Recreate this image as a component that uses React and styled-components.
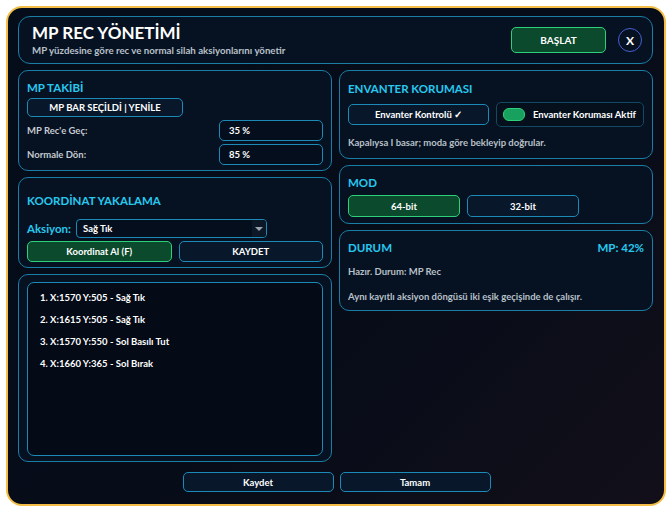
import styled, { createGlobalStyle, css } from 'styled-components';

const GlobalStyle = createGlobalStyle`
	html, body {
		margin: 0;
		padding: 0;
		background: #ffffff;
	}
	body {
		font-family: Lato, "Noto Sans", sans-serif;
		color: #ffffff;
	}
	* { box-sizing: border-box; }
`;

const coords = [
	'1. X:1570 Y:505 - Sağ Tık',
	'2. X:1615 Y:505 - Sağ Tık',
	'3. X:1570 Y:550 - Sol Basılı Tut',
	'4. X:1660 Y:365 - Sol Bırak',
];

export default function App() {
	return (
		<>
			<GlobalStyle />
			<Page>
				<Frame>
					<Header>
						<div>
							<Title>MP REC YÖNETİMİ</Title>
							<Subtitle>MP yüzdesine göre rec ve normal silah aksiyonlarını yönetir</Subtitle>
						</div>
						<HeaderActions>
							<Button green width="95px" height="26px" size="10px">BAŞLAT</Button>
							<CloseButton>X</CloseButton>
						</HeaderActions>
					</Header>

					<Columns>
						<Column>
							<Panel bottom="5px">
								<PanelTitle mb="3px">MP TAKİBİ</PanelTitle>
								<Button width="156px" height="19px">MP BAR SEÇİLDİ | YENİLE</Button>
								<Fields>
									<FieldRow>
										<FieldLabel>MP Rec'e Geç:</FieldLabel>
										<Input>35 %</Input>
									</FieldRow>
									<FieldRow>
										<FieldLabel>Normale Dön:</FieldLabel>
										<Input>85 %</Input>
									</FieldRow>
								</Fields>
							</Panel>

							<Panel bottom="5px">
								<PanelTitle mt="6px" mb="11px">KOORDİNAT YAKALAMA</PanelTitle>
								<ActionRow>
									<ActionLabel>Aksiyon:</ActionLabel>
									<Select>
										<span>Sağ Tık</span>
										<Arrow />
									</Select>
								</ActionRow>
								<ButtonPair cols="1fr 1fr">
									<Button green height="21px">Koordinat Al (F)</Button>
									<Button height="21px">KAYDET</Button>
								</ButtonPair>
							</Panel>

							<Panel grow>
								<ListBox>
									{coords.map((c) => (
										<ListItem key={c}>{c}</ListItem>
									))}
								</ListBox>
							</Panel>
						</Column>

						<Column>
							<Panel bottom="9px">
								<PanelTitle mt="1px" mb="6px">ENVANTER KORUMASI</PanelTitle>
								<ButtonPair cols="141px 148px">
									<Button height="21px">Envanter Kontrolü ✓</Button>
									<ToggleBox>
										<Pill />
										<span>Envanter Koruması Aktif</span>
									</ToggleBox>
								</ButtonPair>
								<Hint top="9px">Kapalıysa I basar; moda göre bekleyip doğrular.</Hint>
							</Panel>

							<Panel bottom="6px">
								<PanelTitle mb="5px">MOD</PanelTitle>
								<ModRow>
									<Button green height="22px">64-bit</Button>
									<Button height="22px">32-bit</Button>
								</ModRow>
							</Panel>

							<Panel bottom="7px">
								<StatusHead>
									<PanelTitle as="span">DURUM</PanelTitle>
									<PanelTitle as="span">MP: 42%</PanelTitle>
								</StatusHead>
								<Hint top="10px">Hazır. Durum: MP Rec</Hint>
								<Hint top="12px">Aynı kayıtlı aksiyon döngüsü iki eşik geçişinde de çalışır.</Hint>
							</Panel>
						</Column>
					</Columns>

					<Footer>
						<Button width="151px" height="20px">Kaydet</Button>
						<Button width="151px" height="20px">Tamam</Button>
					</Footer>
				</Frame>
			</Page>
		</>
	);
}

// STYLES

const Page = styled.div`
	width: 672px;
	height: 512px;
	padding: 6px;
	background: #ffffff;
`;

const Frame = styled.div`
	width: 660px;
	height: 500px;
	border: 2px solid #f4bd45;
	border-radius: 16px;
	background: linear-gradient(135deg, #050d1a 0%, #060c18 55%, #120f19 100%);
	padding: 8px 11px 12px 10px;
	display: flex;
	flex-direction: column;
	overflow: hidden;
`;

const Header = styled.div`
	height: 48px;
	flex-shrink: 0;
	border: 1px solid #1b7ea6;
	border-radius: 12px;
	background: #061222;
	display: flex;
	align-items: center;
	justify-content: space-between;
	padding: 0 10px 0 13px;
`;

const Title = styled.div`
	font-size: 17px;
	font-weight: 700;
	line-height: 20px;
	color: #ffffff;
`;

const Subtitle = styled.div`
	font-size: 9.7px;
	font-weight: 700;
	color: #b8c0c8;
	line-height: 13px;
	margin-top: 1px;
`;

const HeaderActions = styled.div`
	display: flex;
	align-items: center;
	gap: 12px;
`;

const CloseButton = styled.div`
	width: 24px;
	height: 24px;
	border-radius: 50%;
	border: 1px solid #4a5ed0;
	display: flex;
	align-items: center;
	justify-content: center;
	font-size: 12px;
	font-weight: 700;
`;

const Columns = styled.div`
	flex: 1;
	display: grid;
	grid-template-columns: 314px 314px;
	gap: 7px;
	margin-top: 6px;
	min-height: 0;
`;

const Column = styled.div`
	display: flex;
	flex-direction: column;
	gap: 6px;
	min-height: 0;
`;

const Panel = styled.div`
	border: 1px solid #1b7ea6;
	border-radius: 10px;
	background: #061222;
	padding: 9px 8px ${({ bottom }) => bottom || '4px'} 8px;
	${({ grow }) => grow && css`
		flex: 1;
		display: flex;
		padding: 7px 8px 5px 8px;
	`}
`;

const PanelTitle = styled.div`
	font-size: 11.5px;
	font-weight: 700;
	color: #27c9ef;
	line-height: 15px;
	margin-top: ${({ mt }) => mt || '0'};
	margin-bottom: ${({ mb }) => mb || '0'};
`;

const Button = styled.div`
	width: ${({ width }) => width || 'auto'};
	height: ${({ height }) => height || '20px'};
	border: 1px solid ${({ green }) => (green ? '#2fd07a' : '#1b8ab8')};
	background: ${({ green }) => (green ? '#0b4a2c' : '#081729')};
	border-radius: 5px;
	display: flex;
	align-items: center;
	justify-content: center;
	font-size: ${({ size }) => size || '9.5px'};
	font-weight: 700;
	color: #ffffff;
	white-space: nowrap;
`;

const Fields = styled.div`
	display: flex;
	flex-direction: column;
	gap: 3px;
	margin-top: 3px;
`;

const FieldRow = styled.div`
	display: flex;
	align-items: center;
	justify-content: space-between;
`;

const FieldLabel = styled.span`
	font-size: 9.5px;
	font-weight: 700;
	color: #c4cad0;
`;

const Input = styled.div`
	width: 104px;
	height: 21px;
	border: 1px solid #1b8ab8;
	border-radius: 5px;
	background: #050e1c;
	padding-left: 9px;
	display: flex;
	align-items: center;
	font-size: 9.5px;
	font-weight: 700;
	color: #ffffff;
`;

const ActionRow = styled.div`
	display: flex;
	align-items: center;
	gap: 5px;
	margin-bottom: 3px;
`;

const ActionLabel = styled.span`
	font-size: 11.5px;
	font-weight: 700;
	color: #27c9ef;
`;

const Select = styled.div`
	width: 191px;
	height: 19px;
	border: 1px solid #1b8ab8;
	border-radius: 4px;
	background: #050e1c;
	display: flex;
	align-items: center;
	justify-content: space-between;
	padding: 0 0 0 6px;
	font-size: 9.5px;
	font-weight: 700;
	overflow: hidden;
`;

const Arrow = styled.span`
	width: 14px;
	height: 100%;
	background: #0c1828;
	display: flex;
	align-items: center;
	justify-content: center;
	&::after {
		content: '';
		border-left: 4px solid transparent;
		border-right: 4px solid transparent;
		border-top: 4px solid #9aa4ae;
	}
`;

const ButtonPair = styled.div`
	display: grid;
	grid-template-columns: ${({ cols }) => cols};
	gap: 7px;
	align-items: center;
`;

const ListBox = styled.div`
	flex: 1;
	border: 1px solid #1b8ab8;
	border-radius: 7px;
	background: #040a16;
	padding: 8px 12px;
	display: flex;
	flex-direction: column;
	gap: 9px;
`;

const ListItem = styled.div`
	font-size: 9.5px;
	font-weight: 700;
	line-height: 13px;
	color: #ffffff;
`;

const ToggleBox = styled.div`
	height: 25px;
	border: 1px solid #124a62;
	border-radius: 5px;
	background: #06101d;
	display: flex;
	align-items: center;
	gap: 8px;
	padding-left: 6px;
	font-size: 9.5px;
	font-weight: 700;
	color: #ffffff;
	white-space: nowrap;
`;

const Pill = styled.span`
	width: 22px;
	height: 13px;
	border-radius: 6px;
	background: #18a05e;
	border: 1px solid #2fd07a;
`;

const Hint = styled.div`
	font-size: 9.5px;
	font-weight: 700;
	color: #b8c0c8;
	margin-top: ${({ top }) => top || '10px'};
	line-height: 13px;
`;

const ModRow = styled.div`
	display: grid;
	grid-template-columns: 112px 112px;
	gap: 7px;
`;

const StatusHead = styled.div`
	display: flex;
	justify-content: space-between;
	align-items: center;
`;

const Footer = styled.div`
	display: flex;
	justify-content: center;
	gap: 6px;
	margin-top: 10px;
	padding-left: 2px;
	flex-shrink: 0;
`;
